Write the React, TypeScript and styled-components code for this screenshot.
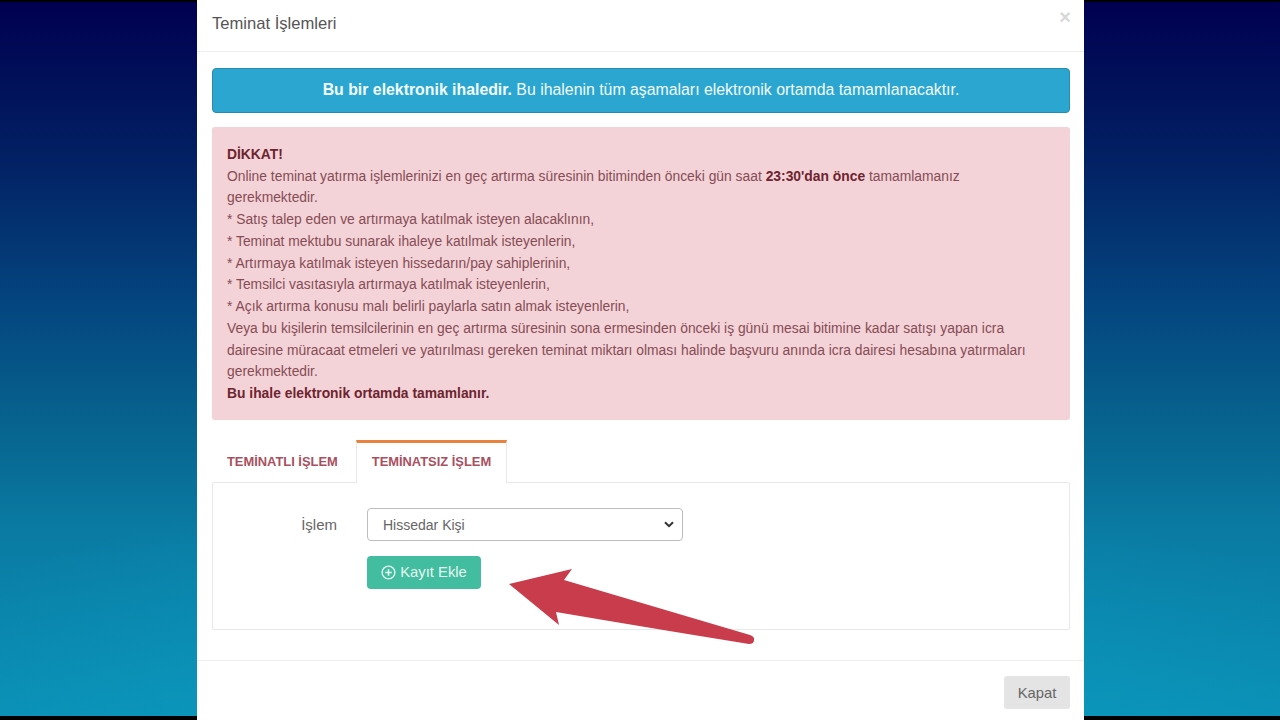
import React from "react";
import styled, { createGlobalStyle } from "styled-components";

const GlobalStyle = createGlobalStyle`
  html, body {
    margin: 0;
    height: 100%;
    overflow: hidden;
    background: #000;
  }
  body {
    font-family: "Liberation Sans", Arial, sans-serif;
  }
`;

const Screen = styled.div`
  width: 1280px;
  height: 720px;
  padding: 2px 0 4px;
  box-sizing: border-box;
  background: #000;
`;

const Backdrop = styled.div`
  height: 100%;
  display: flex;
  justify-content: center;
  padding-left: 1px;
  box-sizing: border-box;
  background:
    radial-gradient(ellipse 62% 34% at 50% 100%, rgba(14, 170, 205, 0.5) 0%, rgba(14, 170, 205, 0) 100%),
    linear-gradient(180deg, #000050 0%, #021f62 21%, #04457f 42%, #07658f 60%, #0a7ba3 74%, #0a8fb5 100%);
`;

const Modal = styled.div`
  position: relative;
  width: 887px;
  margin-top: -2px;
  margin-bottom: -4px;
  background: #fff;
  display: flex;
  flex-direction: column;
`;

const ModalHeader = styled.div`
  height: 52px;
  flex: none;
  box-sizing: border-box;
  padding: 0 13px 3px 15px;
  border-bottom: 1px solid #eeeeee;
  display: flex;
  align-items: center;
  justify-content: space-between;
`;

const ModalTitle = styled.div`
  font-size: 16.6px;
  color: #555;
`;

const CloseMark = styled.span`
  font-size: 20px;
  font-weight: 700;
  line-height: 1;
  color: #d8d8d8;
  margin-top: -15px;
`;

const ModalBody = styled.div`
  flex: 1;
  padding: 16px 14px 30px 15px;
  display: flex;
  flex-direction: column;
`;

const InfoAlert = styled.div`
  height: 45px;
  box-sizing: border-box;
  background: #2ba6d0;
  border: 1px solid #2a8cab;
  border-radius: 4px;
  padding-bottom: 2px;
  color: #f2fbfe;
  font-size: 15.85px;
  display: flex;
  align-items: center;
  justify-content: center;
  white-space: pre;
  margin-bottom: 14px;
`;

const DangerAlert = styled.div`
  height: 293px;
  box-sizing: border-box;
  background: #f3d3d7;
  border-radius: 3px;
  padding: 17px 15px;
  color: #864c56;
  font-size: 13.85px;
  line-height: 21.73px;
  margin-bottom: 20px;
`;

const DarkText = styled.strong`
  color: #6d2430;
  font-weight: 700;
`;

const Line = styled.div`
  white-space: nowrap;
`;

const Tabs = styled.div`
  display: flex;
  height: 42px;
  flex: none;
  position: relative;
  z-index: 1;
`;

const Tab = styled.div<{ $active?: boolean }>`
  box-sizing: border-box;
  height: ${(p) => (p.$active ? "43px" : "42px")};
  padding: 0 15px 3px;
  margin: ${(p) => (p.$active ? "0" : "0 2px 0 -1px")};
  display: flex;
  align-items: center;
  font-size: 12.9px;
  font-weight: 700;
  color: #a9505f;
  background: ${(p) => (p.$active ? "#fff" : "transparent")};
  border-top: ${(p) => (p.$active ? "3px solid #e8823c" : "3px solid transparent")};
  border-left: 1px solid ${(p) => (p.$active ? "#e8e8e8" : "transparent")};
  border-right: 1px solid ${(p) => (p.$active ? "#e8e8e8" : "transparent")};
`;

const TabPanel = styled.div`
  height: 148px;
  flex: none;
  box-sizing: border-box;
  border: 1px solid #e8e8e8;
  border-radius: 2px;
  padding: 25px 0 0;
`;

const FormRow = styled.div`
  display: grid;
  grid-template-columns: 124px 316px;
  column-gap: 30px;
  align-items: center;
`;

const FieldLabel = styled.label`
  font-size: 15px;
  color: #666;
  text-align: right;
`;

const SelectBox = styled.div`
  height: 33px;
  box-sizing: border-box;
  border: 1px solid #bdbdbd;
  border-radius: 4px;
  padding: 0 8px 0 15px;
  font-size: 14px;
  color: #666;
  display: flex;
  align-items: center;
  justify-content: space-between;
`;

const AddButton = styled.div`
  grid-column: 2;
  margin-top: 15px;
  width: 114px;
  height: 33px;
  box-sizing: border-box;
  border-radius: 4px;
  background: #42bd9f;
  color: #e6f7f2;
  font-size: 14.8px;
  display: flex;
  align-items: center;
  justify-content: center;
  gap: 4px;
  padding-bottom: 1px;
`;

const ArrowMark = styled.svg`
  position: absolute;
  left: 303px;
  top: 560px;
  width: 260px;
  height: 90px;
`;

const ModalFooter = styled.div`
  height: 60px;
  flex: none;
  box-sizing: border-box;
  border-top: 1px solid #eeeeee;
  padding: 15px 14px 0;
  display: flex;
  justify-content: flex-end;
`;

const CloseButton = styled.div`
  width: 66px;
  height: 33px;
  border-radius: 3px;
  background: #e4e4e4;
  color: #666;
  font-size: 14.8px;
  display: flex;
  align-items: center;
  justify-content: center;
`;

const App = () => {
  return (
    <Screen>
      <GlobalStyle />
      <Backdrop>
        <Modal>
          <ModalHeader>
            <ModalTitle>Teminat İşlemleri</ModalTitle>
            <CloseMark>×</CloseMark>
          </ModalHeader>
          <ModalBody>
            <InfoAlert>
              <strong>Bu bir elektronik ihaledir.</strong> Bu ihalenin tüm aşamaları elektronik ortamda tamamlanacaktır.
            </InfoAlert>
            <DangerAlert>
              <Line>
                <DarkText>DİKKAT!</DarkText>
              </Line>
              <Line>
                Online teminat yatırma işlemlerinizi en geç artırma süresinin bitiminden önceki gün saat{" "}
                <DarkText>23:30'dan önce</DarkText> tamamlamanız
              </Line>
              <Line>gerekmektedir.</Line>
              <Line>* Satış talep eden ve artırmaya katılmak isteyen alacaklının,</Line>
              <Line>* Teminat mektubu sunarak ihaleye katılmak isteyenlerin,</Line>
              <Line>* Artırmaya katılmak isteyen hissedarın/pay sahiplerinin,</Line>
              <Line>* Temsilci vasıtasıyla artırmaya katılmak isteyenlerin,</Line>
              <Line>* Açık artırma konusu malı belirli paylarla satın almak isteyenlerin,</Line>
              <Line>Veya bu kişilerin temsilcilerinin en geç artırma süresinin sona ermesinden önceki iş günü mesai bitimine kadar satışı yapan icra</Line>
              <Line>dairesine müracaat etmeleri ve yatırılması gereken teminat miktarı olması halinde başvuru anında icra dairesi hesabına yatırmaları</Line>
              <Line>gerekmektedir.</Line>
              <Line>
                <DarkText>Bu ihale elektronik ortamda tamamlanır.</DarkText>
              </Line>
            </DangerAlert>
            <Tabs>
              <Tab>TEMİNATLI İŞLEM</Tab>
              <Tab $active>TEMİNATSIZ İŞLEM</Tab>
            </Tabs>
            <TabPanel>
              <FormRow>
                <FieldLabel>İşlem</FieldLabel>
                <SelectBox>
                  Hissedar Kişi
                  <svg width="10" height="7" viewBox="0 0 10 7">
                    <path d="M1 1.2 L5 5.2 L9 1.2" fill="none" stroke="#333" strokeWidth="2" />
                  </svg>
                </SelectBox>
                <AddButton>
                  <svg width="15" height="15" viewBox="0 0 16 16">
                    <circle cx="8" cy="8" r="6.8" fill="none" stroke="#e6f7f2" strokeWidth="1.5" />
                    <path d="M8 4.5 V11.5 M4.5 8 H11.5" stroke="#e6f7f2" strokeWidth="1.7" />
                  </svg>
                  Kayıt Ekle
                </AddButton>
              </FormRow>
            </TabPanel>
          </ModalBody>
          <ModalFooter>
            <CloseButton>Kapat</CloseButton>
          </ModalFooter>
          <ArrowMark viewBox="0 0 260 90">
            <path
              d="M9 24 L72 9 L64 20 L250 75 Q255 77 254 80 Q254 84 249 84 Q150 68 56 52 L59 65 Z"
              fill="#c83c4b"
            />
          </ArrowMark>
        </Modal>
      </Backdrop>
    </Screen>
  );
};

export default App;
